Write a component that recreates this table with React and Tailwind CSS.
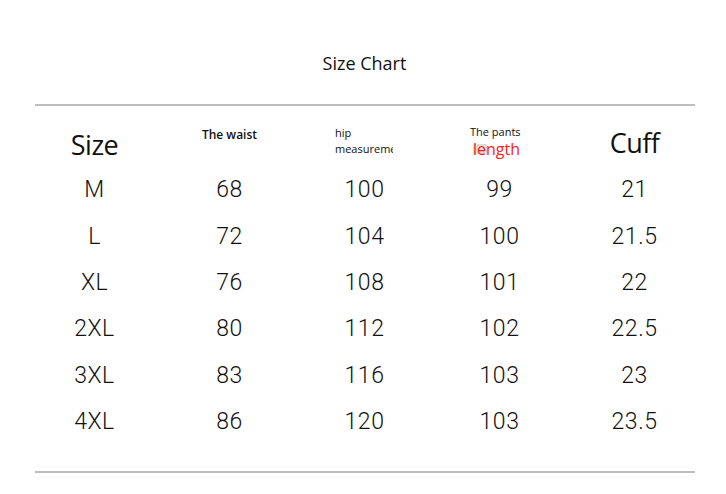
import React from 'react';

const rows = [
    ['M', '68', '100', '99', '21'],
    ['L', '72', '104', '100', '21.5'],
    ['XL', '76', '108', '101', '22'],
    ['2XL', '80', '112', '102', '22.5'],
    ['3XL', '83', '116', '103', '23'],
    ['4XL', '86', '120', '103', '23.5'],
];

const App = () => {
    return (
        <div className="w-[726px] h-[494px] pl-[3px] bg-white text-[#111] overflow-hidden" style={{ fontFamily: 'Roboto, "Liberation Sans", sans-serif' }}>
            {/* Title */}
            <div className="mt-[51px] text-center text-[18px] leading-[24px]" style={{ fontFamily: '"Open Sans", sans-serif' }}>
                Size Chart
            </div>
            <div className="mx-auto mt-[29px] w-[660px] h-[2px] bg-[#bdbdbd]" />

            <div className="mx-auto w-[675px]">
                {/* Header */}
                <div className="grid grid-cols-5 h-[61px] items-start">
                    <div className="pt-[24px] text-center text-[27px] leading-[30px] tracking-[-0.5px]" style={{ fontFamily: '"Open Sans", sans-serif' }}>Size</div>
                    <div className="pt-[21px] text-center text-[12px] leading-[16px] font-semibold" style={{ fontFamily: '"Open Sans", sans-serif' }}>The waist</div>
                    <div className="pt-[19px] pl-[38px] text-[11px] leading-[16px] font-medium" style={{ fontFamily: '"Open Sans", sans-serif' }}>
                        <div>hip</div>
                        <div className="w-[58px] overflow-hidden whitespace-nowrap">measurement</div>
                    </div>
                    <div className="pt-[18px] pl-[38px] font-medium" style={{ fontFamily: '"Open Sans", sans-serif' }}>
                        <div className="text-[11px] leading-[16px]">The pants</div>
                        <div className="relative ml-[3px] text-[16px] leading-[18px] text-[#ff2020]">
                            <span className="absolute left-0 top-[4px] w-[14px] h-[10px] bg-[#dcdcdc]" />
                            <span className="relative">length</span>
                        </div>
                    </div>
                    <div className="pt-[22px] text-center text-[27px] leading-[30px] tracking-[-0.5px]" style={{ fontFamily: '"Open Sans", sans-serif' }}>Cuff</div>
                </div>

                {/* Rows */}
                {rows.map((r) => (
                    <div key={r[0]} className="grid grid-cols-5 h-[46.4px] items-center">
                        {r.map((c, i) => (
                            <div key={i} className="text-center text-[23px] leading-[28px] font-light tracking-[0.5px]">{c}</div>
                        ))}
                    </div>
                ))}
            </div>

            <div className="mx-auto mt-[26px] w-[660px] h-[2px] bg-[#bdbdbd]" />
        </div>
    );
};

export default App;
